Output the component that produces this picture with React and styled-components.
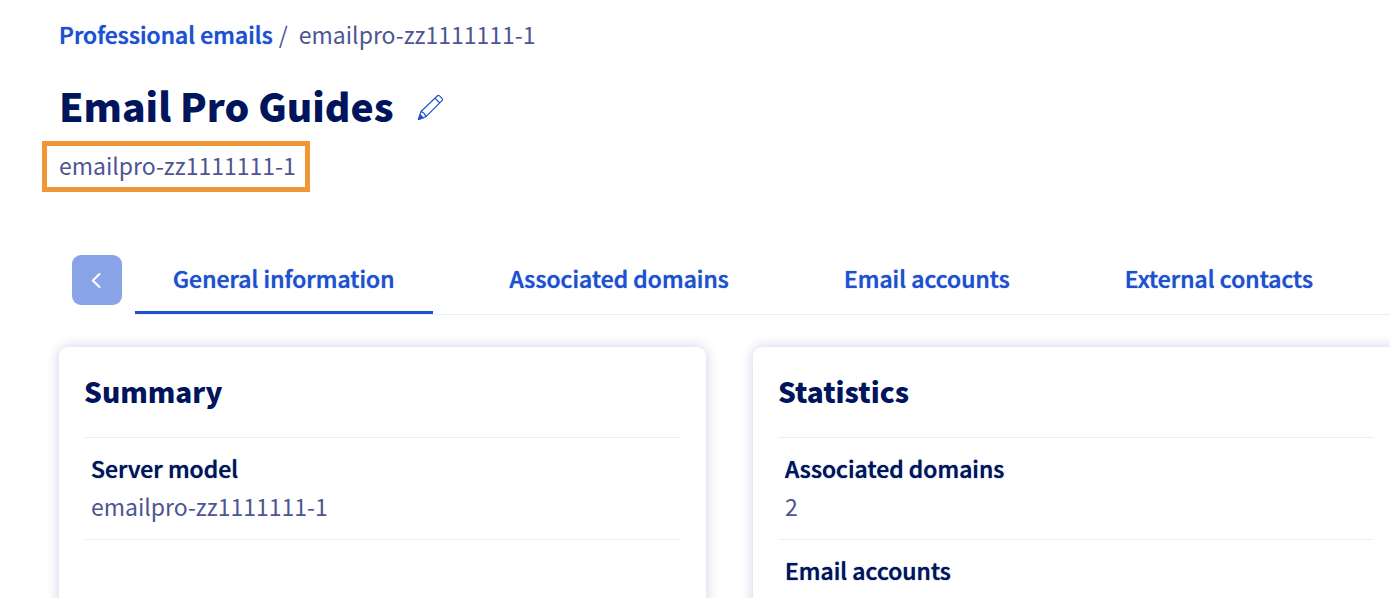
import React from 'react';
import styled, { createGlobalStyle, css } from 'styled-components';

const GlobalStyle = createGlobalStyle`
  *, *::before, *::after { box-sizing: border-box; }
  body {
    margin: 0;
    background: #fff;
    color: #4d5592;
    font-family: "Source Sans Pro", "Noto Sans CJK SC", "Noto Sans", sans-serif;
    font-size: 23px;
    line-height: 38px;
  }
`;

const semibold = css`
  font-weight: 500;
  text-shadow: 0 0 1px currentColor;
`;

const Page = styled.main`
  display: flex;
  flex-direction: column;
  min-height: 100vh;
  padding: 15px 0 0 59px;
  overflow: hidden;
`;

const Breadcrumb = styled.nav`
  display: flex;
  gap: 6px;
`;

const CrumbLink = styled.a`
  color: #1f50d0;
  text-decoration: none;
  ${semibold}
`;

const Crumb = styled.span`
  margin-left: 5px;
`;

const TitleRow = styled.div`
  display: flex;
  align-items: center;
  gap: 23px;
  margin-top: 24px;
`;

const Title = styled.h1`
  margin: 0;
  padding-bottom: 4px;
  color: #00155c;
  font-size: 39px;
  line-height: 56px;
  font-weight: 900;
`;

const EditButton = styled.button`
  display: flex;
  padding: 0;
  border: 0;
  background: none;
  color: #1f50d0;
  cursor: pointer;
`;

const ServiceName = styled.p`
  align-self: flex-start;
  margin: 4px 0 0 -17px;
  padding: 0 9px 3px 12px;
  border: 5px solid #ef9736;
`;

const TabBar = styled.div`
  display: flex;
  align-items: flex-start;
  gap: 13px;
  margin: 54px 0 0 13px;
`;

const ScrollButton = styled.button`
  display: flex;
  flex: none;
  align-items: center;
  justify-content: center;
  width: 50px;
  height: 50px;
  margin-top: 9px;
  padding: 0;
  border: 0;
  border-radius: 9px;
  background: #88a4e6;
  color: #fff;
`;

const TabList = styled.div`
  display: flex;
  flex: 1;
  gap: 39px;
  min-width: 0;
  border-bottom: 1px solid #e3f1fc;
`;

const Tab = styled.button`
  flex: none;
  padding: 13px 38px 14px;
  border: 0;
  border-bottom: 3px solid ${(p) => (p.$active ? '#1f50d0' : 'transparent')};
  background: none;
  color: #1f50d0;
  font: inherit;
  cursor: pointer;
  ${semibold}
`;

const Cards = styled.div`
  display: grid;
  flex: 1;
  grid-template-columns: 1fr 1fr;
  gap: 47px;
  margin: 32px -10px -24px 0;
`;

const Card = styled.section`
  padding: 24px 26px 24px 25px;
  border-radius: 9px;
  background: #fff;
  box-shadow: 0 0 13px rgba(0, 14, 156, 0.2);
`;

const CardTitle = styled.h2`
  margin: 0 0 26px;
  color: #00155c;
  font-size: 28px;
  line-height: 40px;
  font-weight: 900;
`;

const Details = styled.dl`
  margin: 0;
`;

const Detail = styled.div`
  padding: 11px 7px 14px;
  border-top: 1px solid #efeff1;
  ${(p) => p.$closed && 'border-bottom: 1px solid #efeff1;'}
`;

const Term = styled.dt`
  color: #00155c;
  ${semibold}
`;

const Value = styled.dd`
  margin: 0;
`;

const PencilIcon = () => (
  <svg width="27" height="27" viewBox="0 0 27 27" fill="none" stroke="currentColor" strokeWidth="1.2" strokeLinejoin="round" aria-hidden="true">
    <path d="M4 17.500 20.500 1.800Q21.500 1 22.500 1.900L25.200 4.600Q26 5.500 25.200 6.400L9 22.700" />
    <path d="M18 4.200 22.800 9M4 17.500Q7.800 18.800 9 22.700L1.500 25.500Z" />
    <path d="M3.100 20.600 6.200 23.800 1.500 25.500Z" fill="currentColor" />
  </svg>
);

const ChevronIcon = () => (
  <svg width="16" height="16" viewBox="0 0 16 16" fill="none" stroke="currentColor" strokeWidth="2" strokeLinecap="round" strokeLinejoin="round" aria-hidden="true">
    <path d="M10.500 2 3.800 8.500 10.500 15" />
  </svg>
);

const tabs = ['General information', 'Associated domains', 'Email accounts', 'External contacts'];
const service = 'emailpro-zz1111111-1';

export default function App() {
  const [active, setActive] = React.useState(tabs[0]);
  return (
    <>
      <GlobalStyle />
      <Page>
        <Breadcrumb aria-label="Breadcrumb">
          <CrumbLink href="#emails">Professional emails</CrumbLink>
          <span aria-hidden="true">/</span>
          <Crumb aria-current="page">{service}</Crumb>
        </Breadcrumb>
        <TitleRow>
          <Title>Email Pro Guides</Title>
          <EditButton type="button" aria-label="Edit name"><PencilIcon /></EditButton>
        </TitleRow>
        <ServiceName>{service}</ServiceName>
        <TabBar>
          <ScrollButton type="button" aria-label="Previous tabs"><ChevronIcon /></ScrollButton>
          <TabList role="tablist">
            {tabs.map((name) => (
              <Tab key={name} type="button" role="tab" aria-selected={name === active} $active={name === active} onClick={() => setActive(name)}>
                {name}
              </Tab>
            ))}
          </TabList>
        </TabBar>
        <Cards>
          <Card>
            <CardTitle>Summary</CardTitle>
            <Details>
              <Detail $closed>
                <Term>Server model</Term>
                <Value>{service}</Value>
              </Detail>
            </Details>
          </Card>
          <Card>
            <CardTitle>Statistics</CardTitle>
            <Details>
              <Detail>
                <Term>Associated domains</Term>
                <Value>2</Value>
              </Detail>
              <Detail>
                <Term>Email accounts</Term>
              </Detail>
            </Details>
          </Card>
        </Cards>
      </Page>
    </>
  );
}
